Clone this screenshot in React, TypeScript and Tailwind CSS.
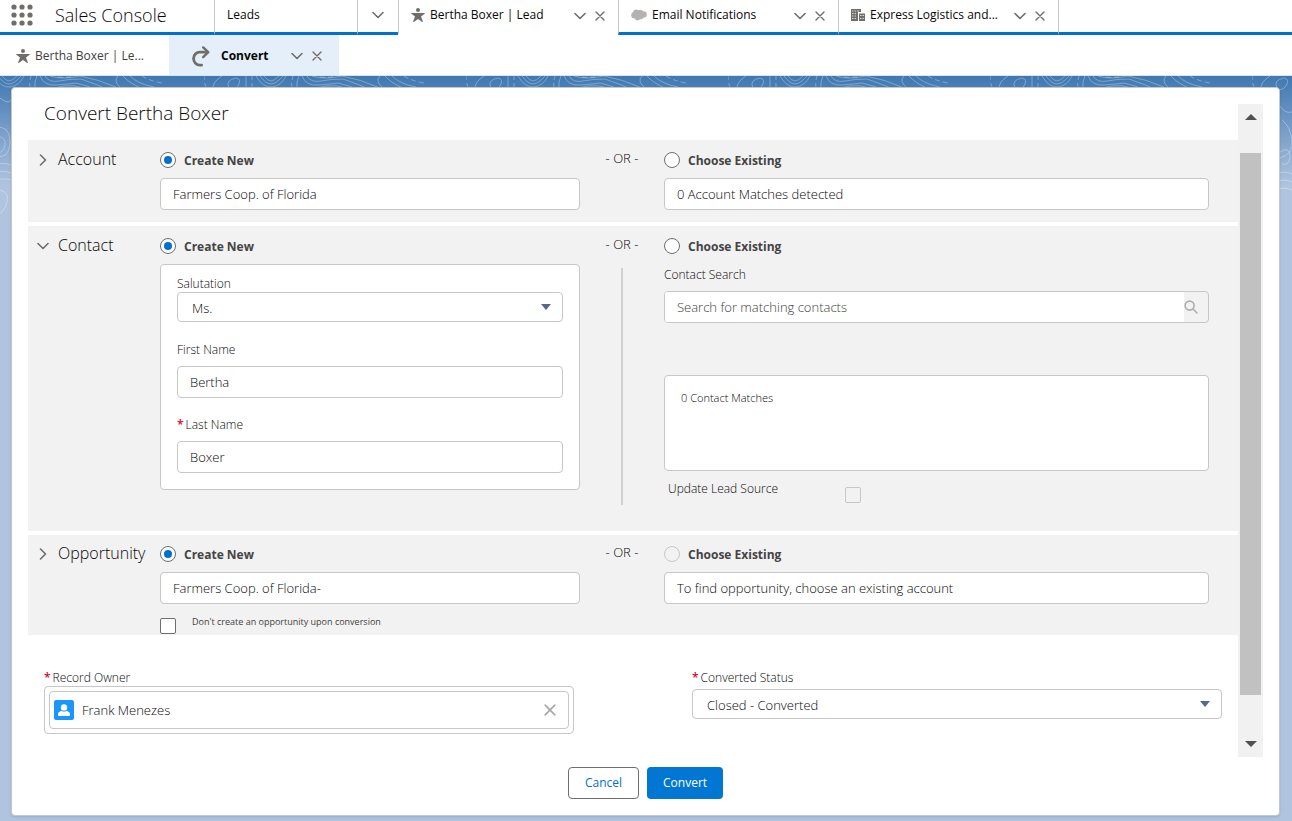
import type { ReactNode } from "react";

const FIELD = "h-8 w-full min-w-0 rounded border border-[#c9c7c5] bg-white px-3 text-[13px] font-light text-[#080707] outline-none";
const LABEL = "block text-xs leading-4 font-light text-[#080707]";

function LeadIcon() {
  return (
    <svg viewBox="0 0 14 14" className="size-[14px] shrink-0 fill-[#706e6b]" aria-hidden="true">
      <circle cx="7" cy="2" r="2" />
      <path d="M.6 5h12.8c.5 0 .6.5.2.8L10 8.4l1.9 5c.2.5-.3.8-.7.5L7 11 2.8 13.9c-.4.3-.9 0-.7-.5l1.9-5L.4 5.800C0 5.500.1 5 .6 5z" />
    </svg>
  );
}

function CloudIcon() {
  return (
    <svg viewBox="0 0 16 12" className="h-3 w-4 shrink-0 fill-[#b5b3b1]" aria-hidden="true">
      <circle cx="3.6" cy="6.2" r="3.3" />
      <circle cx="5.2" cy="3.6" r="3" />
      <circle cx="9.4" cy="3.4" r="2.6" />
      <circle cx="12.6" cy="5.4" r="3.2" />
      <circle cx="10" cy="7.6" r="2.6" />
      <circle cx="6.6" cy="8.6" r="2.8" />
      <path d="M4 3h8v6H4z" />
    </svg>
  );
}

function AccountIcon() {
  return (
    <svg viewBox="0 0 14 12" className="h-3 w-[14px] shrink-0" aria-hidden="true">
      <path d="M0 0h10v3H7v9H0zM8 4.4h6V12H8z" fill="#706e6b" />
      <path
        d="M1 2h1.5M3.5 2H5M6 2h2M1 4.5h1.5M3.5 4.5H5M1 7h1.5M3.5 7H5M1 9.5h1.5M3.5 9.5H5M9 6.5h1.5M11.5 6.5H13M9 9.5h1.5M11.5 9.5H13"
        stroke="#d8d7d6"
        strokeWidth="1.2"
      />
    </svg>
  );
}

function RedoIcon() {
  return (
    <svg viewBox="0 0 18 21" className="h-[21px] w-[18px] shrink-0" fill="none" stroke="#706e6b" strokeLinecap="round" aria-hidden="true">
      <path d="M15.5 6.2H8.2A6.2 6.2 0 0 0 1.6 12.4a6.5 6.5 0 0 0 6.6 6.8h1.4" strokeWidth="2.8" />
      <path d="M11.2 1.4l5 4.8-5 4.9" strokeWidth="2.4" strokeLinejoin="round" />
    </svg>
  );
}

function Chevron({ className = "" }: { className?: string }) {
  return (
    <svg viewBox="0 0 12 12" className={`size-3 shrink-0 ${className}`} fill="none" stroke="#706e6b" strokeWidth="1.6" strokeLinecap="round" strokeLinejoin="round" aria-hidden="true">
      <path d="M1 3.5l5 5 5-5" />
    </svg>
  );
}

function Cross({ className = "size-[10px]" }: { className?: string }) {
  return (
    <svg viewBox="0 0 10 10" className={`shrink-0 ${className}`} fill="none" stroke="#706e6b" strokeWidth="1.4" strokeLinecap="round" aria-hidden="true">
      <path d="M1 1l8 8M9 1L1 9" />
    </svg>
  );
}

function TabActions({ name }: { name: string }) {
  return (
    <span className="ml-auto flex items-center gap-[9px]">
      <button type="button" aria-label={`${name} actions`}>
        <Chevron />
      </button>
      <button type="button" aria-label={`Close ${name}`}>
        <Cross />
      </button>
    </span>
  );
}

interface WorkspaceTabProps {
  icon: ReactNode;
  title: string;
  active?: boolean;
}

function WorkspaceTab({ icon, title, active }: WorkspaceTabProps) {
  return (
    <div
      className={`flex w-[220px] items-center border-b-[3px] border-l border-[#c9c7c5] pr-[13px] pl-3 ${
        active ? "border-b-white" : "border-b-[#0070d2]"
      }`}
    >
      <a href="#" className="flex h-full items-center gap-[5px] truncate pb-[3px]">
        {icon}
        {title}
      </a>
      <TabActions name={title} />
    </div>
  );
}

function TopBar() {
  return (
    <nav className="flex h-[35px] bg-white text-xs text-[#080707]">
      <div className="flex w-[214px] items-center border-b-[3px] border-[#0070d2] pb-[3px] pl-[11px]">
        <button type="button" aria-label="App Launcher">
          <svg viewBox="0 0 22 22" className="size-[22px] fill-[#706e6b]">
            {[3, 11, 19].map((y) => [3, 11, 19].map((x) => <circle key={`${x}-${y}`} cx={x} cy={y} r="2.6" />))}
          </svg>
        </button>
        <span className="ml-[22px] text-lg font-light">Sales Console</span>
      </div>
      <div className="flex w-[143px] items-center border-b-[3px] border-l border-[#c9c7c5] border-b-[#0070d2] pb-[3px] pl-3">
        <a href="#">Leads</a>
      </div>
      <button
        type="button"
        aria-label="Show navigation menu"
        className="flex w-[41px] items-center justify-center border-b-[3px] border-l border-[#c9c7c5] border-b-[#0070d2] pb-[3px]"
      >
        <Chevron />
      </button>
      <WorkspaceTab icon={<LeadIcon />} title="Bertha Boxer | Lead" active />
      <WorkspaceTab icon={<CloudIcon />} title="Email Notifications" />
      <WorkspaceTab icon={<AccountIcon />} title="Express Logistics and..." />
      <div className="flex-1 border-b-[3px] border-l border-[#c9c7c5] border-b-[#0070d2]" />
    </nav>
  );
}

function SubTabs() {
  return (
    <nav className="flex h-[41px] border-b border-[#d8e6ea] bg-white text-xs">
      <a href="#" className="flex w-[169px] items-center gap-[5px] pt-[2px] pl-4 text-[#3e3e3c]">
        <LeadIcon />
        Bertha Boxer | Le...
      </a>
      <div className="flex w-[170px] items-center bg-[#e5effa] pt-[2px] pr-[17px] pl-[23px]">
        <a href="#" className="flex items-center gap-[11px] font-bold text-[#080707]">
          <RedoIcon />
          Convert
        </a>
        <TabActions name="Convert" />
      </div>
    </nav>
  );
}

// Contour-line backdrop, tiled sideways behind the card.
function Topography() {
  return (
    <svg className="absolute inset-x-0 top-0 h-[150px] w-full" aria-hidden="true">
      <defs>
        <pattern id="contours" x="-58" y="0" width="262" height="150" patternUnits="userSpaceOnUse">
          <g fill="none" stroke="#fff" strokeOpacity=".3" strokeWidth="1">
            <path d="M0 0q0 6 2 11M48 0v11M89 0q-2 6-1 11" strokeDasharray="4 3" />
            <path d="M18 0q-10 6-9 14q2 14 14 16" />
            <path d="M32 2q6 1 2 8q-5 6-9 2q-4-8 7-10z" />
            <path d="M42 0v12M95 0q-3 6-2 12" />
            <path d="M52 0q7 12 16 11t14-11M56 0q6 8 11 8t12-8M60 0q4 5 7 5t8-5" />
            <path d="M98 0q4 10 16 9t20-2q14 3 22 8M103 0q4 7 14 5t22-2q18 6 30 12M108 0q12 4 30 0q18 3 38 12" />
            <path d="M112 12q22-6 34 3" />
            <path d="M116 1q10 1 16-1" strokeDasharray="5 3" />
            <path d="M176 0q-5 5 2 11M181 0q6 7 20 13M188 0q8 8 24 11" />
            <path d="M200 0q8 5 20 7" strokeDasharray="5 3" />
            <path d="M58 22q10 8 12 0M52 52q16-4 16 14t-16 14M56 60q8 2 7 9t-7 8M54 88q12-2 20 3M54 96q12-2 20 3M54 104q12-3 20 2M54 114q14 0 11 12t-13 14" />
            <path d="M28 30q5 8 12 6M30 44q8 6 10 20t-12 18M28 76q10-6 10 4t-8 8M24 98q8-4 16 0M24 106q8-4 16 0M24 114q8-4 16 0" />
          </g>
        </pattern>
      </defs>
      <rect width="100%" height="150" fill="url(#contours)" />
    </svg>
  );
}

interface RadioProps {
  name: string;
  label: string;
  checked?: boolean;
  disabled?: boolean;
}

function Radio({ name, label, checked, disabled }: RadioProps) {
  return (
    <label className="flex h-5 items-center gap-2 text-xs font-bold text-[#444]">
      <input
        type="radio"
        name={name}
        defaultChecked={checked}
        disabled={disabled}
        className="grid size-4 shrink-0 appearance-none place-content-center rounded-full border border-[#706e6b] bg-white before:size-2 before:rounded-full checked:before:bg-[#0070d2] disabled:border-[#c9c7c5] disabled:bg-[#f3f2f2]"
      />
      <span className="pt-px">{label}</span>
    </label>
  );
}

interface SectionProps {
  title: string;
  open?: boolean;
  existingDisabled?: boolean;
  className: string;
  create: ReactNode;
  existing: ReactNode;
}

function Section({ title, open, existingDisabled, className, create, existing }: SectionProps) {
  return (
    <section className={`grid grid-cols-[132px_420fr_84px_545fr] bg-[#f3f2f2] pr-[29px] ${className}`}>
      <h2>
        <button type="button" aria-expanded={open ?? false} className="flex h-5 items-center gap-[9px] pl-[9px] text-base leading-5 font-light text-[#080707]">
          <Chevron className={open ? "" : "-rotate-90"} />
          <span className="pb-[3px]">{title}</span>
        </button>
      </h2>
      <div className="flex flex-col gap-2">
        <Radio name={title} label="Create New" checked />
        {create}
      </div>
      <div className="flex flex-col items-center gap-4">
        <span className="text-[13px] leading-4 font-light text-[#080707]">- OR -</span>
        {open && <div className="mb-[26px] w-[2px] flex-1 bg-[#d0d0d0]" />}
      </div>
      <div className="flex flex-col gap-2">
        <Radio name={title} label="Choose Existing" disabled={existingDisabled} />
        {existing}
      </div>
    </section>
  );
}

function Select({ id, value }: { id: string; value: string }) {
  return (
    <div className="relative">
      <select
        id={id}
        defaultValue={value}
        className="block h-[30px] w-full appearance-none rounded border border-[#c9c7c5] bg-white px-[14px] pt-[3px] text-[13px] font-light text-[#080707] outline-none"
      >
        <option>{value}</option>
      </select>
      <svg viewBox="0 0 10 6" className="pointer-events-none absolute top-3 right-3 h-[6px] w-[10px] fill-[#54698d]" aria-hidden="true">
        <path d="M0 0h10L5 6z" />
      </svg>
    </div>
  );
}

function Required() {
  return <abbr title="required" className="mr-[2px] font-semibold text-[#e1002d] no-underline">*</abbr>;
}

function ContactForm() {
  return (
    <div className="rounded border border-[#c9c7c5] bg-white px-4 pt-[11px] pb-4">
      <label htmlFor="salutation" className={LABEL}>Salutation</label>
      <Select id="salutation" value="Ms." />
      <label htmlFor="first-name" className={`mt-5 mb-2 ${LABEL}`}>First Name</label>
      <input id="first-name" defaultValue="Bertha" className={FIELD} />
      <label htmlFor="last-name" className={`mt-[19px] mb-2 ${LABEL}`}>
        <Required />
        Last Name
      </label>
      <input id="last-name" defaultValue="Boxer" className={FIELD} />
    </div>
  );
}

function ContactMatches() {
  return (
    <div className="pt-[3px] pb-7">
      <label htmlFor="contact-search" className={LABEL}>Contact Search</label>
      <div className="mt-2 flex h-8 overflow-hidden rounded border border-[#c9c7c5]">
        <input
          id="contact-search"
          type="search"
          placeholder="Search for matching contacts"
          className="min-w-0 flex-1 bg-white px-3 pt-px text-[13px] font-light outline-none placeholder:text-[#3e3e3c]"
        />
        <button type="button" aria-label="Search contacts" className="w-6">
          <svg viewBox="0 0 14 14" className="size-[14px]" fill="none" stroke="#b0adab" strokeWidth="1.6" strokeLinecap="round">
            <circle cx="5.6" cy="5.6" r="4.5" />
            <path d="M9 9l4 4" />
          </svg>
        </button>
      </div>
      <div className="mt-[52px] h-24 rounded border border-[#c9c7c5] bg-white p-4 text-[11px] leading-3 font-light text-[#080707]">
        0 Contact Matches
      </div>
      <label className="flex pt-[10px] pl-1 text-xs leading-4 font-light text-[#080707]">
        <span className="w-[177px]">Update Lead Source</span>
        <input type="checkbox" disabled className="mt-[6px] size-4 appearance-none rounded-[2px] border border-[#c9c7c5]" />
      </label>
    </div>
  );
}

function ConvertForm() {
  return (
    <div className="min-w-0 flex-1">
      <h1 className="h-9 px-4 text-[19px] leading-[18px] font-light text-[#080707]">Convert Bertha Boxer</h1>
      <div className="flex flex-col gap-1">
        <Section
          title="Account"
          className="pt-[10px] pb-3"
          create={<input aria-label="Account name" defaultValue="Farmers Coop. of Florida" className={FIELD} />}
          existing={<input aria-label="Existing account" defaultValue="0 Account Matches detected" className={FIELD} />}
        />
        <Section title="Contact" open className="pt-[10px]" create={<ContactForm />} existing={<ContactMatches />} />
        <Section
          title="Opportunity"
          existingDisabled
          className="pt-[9px] pb-px"
          create={
            <>
              <input aria-label="Opportunity name" defaultValue="Farmers Coop. of Florida-" className={FIELD} />
              <label className="flex gap-4 pt-[6px] text-[9px] leading-2 text-[#3e3e3c]">
                <input type="checkbox" className="size-4 appearance-none rounded-[2px] border border-[#706e6b] bg-white" />
                Don't create an opportunity upon conversion
              </label>
            </>
          }
          existing={<input aria-label="Existing opportunity" defaultValue="To find opportunity, choose an existing account" className={FIELD} />}
        />
      </div>
      <div className="grid grid-cols-2 gap-x-[118px] px-4 pt-[35px] pb-[23px]">
        <div>
          <label htmlFor="owner" className={LABEL}>
            <Required />
            Record Owner
          </label>
          <div className="rounded border border-[#c9c7c5] p-1">
            <div className="flex h-[38px] items-center gap-2 rounded border border-[#c9c7c5] pr-3 pl-1">
              <svg viewBox="0 0 20 20" className="size-5 shrink-0" aria-hidden="true">
                <rect width="20" height="20" rx="2" fill="#1b96ff" />
                <circle cx="10" cy="7.4" r="3.2" fill="#fff" />
                <path d="M4 15v-1c0-1.6 2-2.6 3.8-3.2.4.5 1.2.9 2.2.9s1.8-.4 2.2-.9C14 11.4 16 12.4 16 14v1c0 .6-.4 1-1 1H5c-.6 0-1-.4-1-1z" fill="#fff" />
              </svg>
              <input id="owner" defaultValue="Frank Menezes" className="min-w-0 flex-1 pt-[2px] text-[13px] font-light text-[#080707] outline-none" />
              <button type="button" aria-label="Remove Frank Menezes">
                <Cross className="size-3 opacity-60" />
              </button>
            </div>
          </div>
        </div>
        <div>
          <label htmlFor="status" className={`mb-[3px] ${LABEL}`}>
            <Required />
            Converted Status
          </label>
          <Select id="status" value="Closed - Converted" />
        </div>
      </div>
    </div>
  );
}

function ScrollTrack() {
  return (
    <div className="flex w-[25px] flex-col items-center bg-[#f1f1f1] py-[10px]" aria-hidden="true">
      <svg viewBox="0 0 12 6" className="h-[6px] w-3 fill-[#505050]">
        <path d="M0 6l6-6 6 6z" />
      </svg>
      <div className="mt-[33px] mb-[46px] w-[21px] flex-1 bg-[#c1c1c1]" />
      <svg viewBox="0 0 12 6" className="h-[6px] w-3 fill-[#505050]">
        <path d="M0 0l6 6 6-6z" />
      </svg>
    </div>
  );
}

export default function App() {
  return (
    <div className="flex min-h-screen flex-col bg-[#b0c4df] font-['Open_Sans','Noto_Sans',sans-serif]">
      <TopBar />
      <SubTabs />
      <main className="relative flex flex-1 flex-col bg-linear-to-b from-[#3f78b2] from-0% to-[#b0c4df] to-[110px] pt-[11px] pr-3 pb-[5px] pl-[11px]">
        <Topography />
        <form className="relative flex flex-1 flex-col rounded border border-[#c9c7c5] bg-white px-4 pt-4 pb-[15px] shadow-sm">
          <div className="flex">
            <ConvertForm />
            <ScrollTrack />
          </div>
          <div className="mt-[10px] flex justify-center gap-2 text-xs">
            <button type="button" className="h-8 rounded border border-[#706e6b] bg-white px-4 text-[#0070d2]">
              Cancel
            </button>
            <button type="button" className="h-8 rounded bg-[#0176d3] px-4 text-white">
              Convert
            </button>
          </div>
        </form>
      </main>
    </div>
  );
}
